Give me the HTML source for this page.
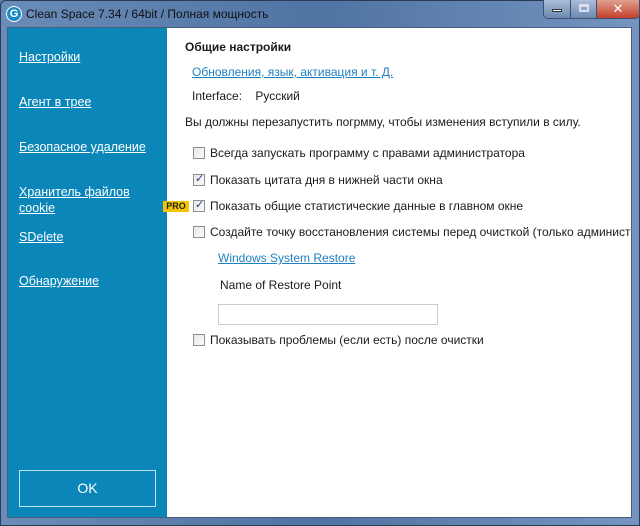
<!DOCTYPE html>
<html><head><meta charset="utf-8"><style>
*{margin:0;padding:0;box-sizing:border-box}
body{width:640px;height:526px;overflow:hidden;font-family:"Liberation Sans","DejaVu Sans",sans-serif;font-size:12px;color:#1a1a1a;position:relative;background:#5d7fa6}
.frame{position:absolute;left:0;top:0;width:640px;height:526px;border-radius:6px 6px 0 0;background:linear-gradient(90deg,#6a8cb8 0,#4f73a3 50%,#7595c0 100%);border:1px solid #2a3b55}
.title{position:absolute;left:26px;top:7px;font-size:12px;color:#111}
.logo{position:absolute;left:6px;top:6px;width:16px;height:16px;border-radius:50%;background:#1b8cc6;border:1px solid #fff;color:#fff;font-size:11px;font-weight:bold;text-align:center;line-height:14px}
.btns{position:absolute;left:543px;top:0;height:19px;border:1px solid #3b5273;border-top:none;border-radius:0 0 5px 5px;display:flex;overflow:hidden}
.btns div{height:18px}
.content{position:absolute;left:7px;top:27px;width:625px;height:491px;background:#fff;border:1px solid #4a5f7d;overflow:hidden}
.side{position:absolute;left:0;top:0;width:159px;height:100%;background:#0a86b8}
.side a{position:absolute;left:11px;color:#fff;text-decoration:underline;font-size:12.5px;line-height:16px}
.ok{position:absolute;left:11px;top:442px;width:137px;height:37px;border:1px solid #bfe3f2;color:#fff;font-size:14px;text-align:center;line-height:35px}
.t{position:absolute;white-space:nowrap}
.lnk{color:#1f7fc0;text-decoration:underline}
.cb{position:absolute;width:12px;height:12px;border:1px solid #8f8f8f;background:linear-gradient(135deg,#e8e8e8,#fafafa)}
.cb.c::after{content:"✓";position:absolute;left:1px;top:-3px;font-size:11px;color:#243c8a;font-weight:bold}
.pro{position:absolute;top:173px;width:26px;height:11px;background:#f5c400;font-size:9px;font-weight:bold;line-height:11px;text-align:center;color:#222}
.inp{position:absolute;left:210px;top:276px;width:220px;height:21px;border:1px solid #ccc}
</style></head><body>
<div class="frame"></div>
<div class="logo">G</div>
<div class="title">Clean Space 7.34 / 64bit / Полная мощность</div>
<div class="btns"><div style="width:26px;background:linear-gradient(#a9bdd8,#6c89b0)"><div style="margin:9px 8px 0;width:10px;height:3px;background:#fff;border:1px solid #333"></div></div><div style="width:26px;background:linear-gradient(#a9bdd8,#6c89b0);border-left:1px solid #3b5273"><div style="margin:4px 8px 0;width:10px;height:8px;border:2px solid #dde;border-top-width:3px"></div></div><div style="width:43px;background:linear-gradient(#e0a090,#c4402a);border-left:1px solid #3b5273;color:#fff;font-weight:bold;text-align:center;font-size:13px;line-height:17px">✕</div></div>
<div class="content">
<div class="side">
<a style="top:21px">Настройки</a>
<a style="top:66px">Агент в трее</a>
<a style="top:111px">Безопасное удаление</a>
<a style="top:156px">Хранитель файлов<br>cookie</a>
<a style="top:201px">SDelete</a>
<a style="top:245px">Обнаружение</a>
<div class="ok">OK</div>
</div>
<div class="t" style="left:177px;top:12px;font-weight:bold">Общие настройки</div>
<div class="t lnk" style="left:184px;top:37px">Обновления, язык, активация и т. Д.</div>
<div class="t" style="left:184px;top:61px">Interface:&nbsp;&nbsp;&nbsp; Русский</div>
<div class="t" style="left:177px;top:87px">Вы должны перезапустить погрмму, чтобы изменения вступили в силу.</div>
<div class="cb" style="left:185px;top:119px"></div><div class="t" style="left:202px;top:118px">Всегда запускать программу с правами администратора</div>
<div class="cb c" style="left:185px;top:146px"></div><div class="t" style="left:202px;top:145px">Показать цитата дня в нижней части окна</div>
<div class="pro" style="left:155px">PRO</div>
<div class="cb c" style="left:185px;top:172px"></div><div class="t" style="left:202px;top:171px">Показать общие статистические данные в главном окне</div>
<div class="cb" style="left:185px;top:198px"></div><div class="t" style="left:202px;top:197px">Создайте точку восстановления системы перед очисткой (только администратора)</div>
<div class="t lnk" style="left:210px;top:223px">Windows System Restore</div>
<div class="t" style="left:212px;top:250px">Name of Restore Point</div>
<div class="inp"></div>
<div class="cb" style="left:185px;top:306px"></div><div class="t" style="left:202px;top:305px">Показывать проблемы (если есть) после очистки</div>
</div>
</body></html>
